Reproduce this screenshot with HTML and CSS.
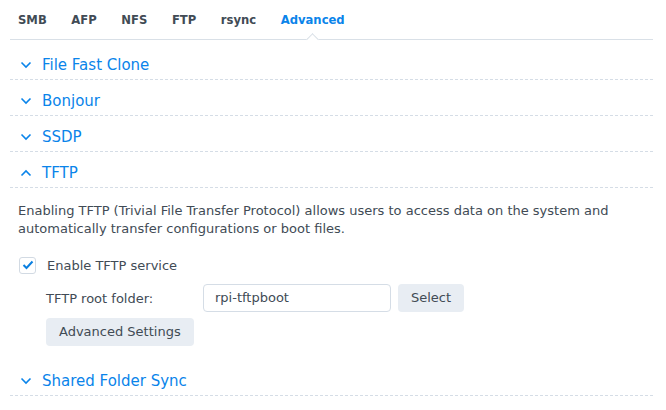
FILE: index.html
```html
<!DOCTYPE html>
<html>
<head>
<meta charset="utf-8">
<link rel="stylesheet" href="styles.css">
</head>
<body>
<div class="page">
  <nav class="tabs">
    <span class="tab">SMB</span>
    <span class="tab">AFP</span>
    <span class="tab">NFS</span>
    <span class="tab">FTP</span>
    <span class="tab">rsync</span>
    <span class="tab active">Advanced</span>
  </nav>
  <div class="sections">
    <div class="section-head">
      <svg class="chev" width="12" height="8" viewBox="0 0 12 8"><path d="M1.5 1.5 L6 6 L10.5 1.5" fill="none" stroke="currentColor" stroke-width="1.6"/></svg>
      <span>File Fast Clone</span>
    </div>
    <div class="section-head">
      <svg class="chev" width="12" height="8" viewBox="0 0 12 8"><path d="M1.5 1.5 L6 6 L10.5 1.5" fill="none" stroke="currentColor" stroke-width="1.6"/></svg>
      <span>Bonjour</span>
    </div>
    <div class="section-head">
      <svg class="chev" width="12" height="8" viewBox="0 0 12 8"><path d="M1.5 1.5 L6 6 L10.5 1.5" fill="none" stroke="currentColor" stroke-width="1.6"/></svg>
      <span>SSDP</span>
    </div>
    <div class="section-head">
      <svg class="chev" width="12" height="8" viewBox="0 0 12 8"><path d="M1.5 6.5 L6 2 L10.5 6.5" fill="none" stroke="currentColor" stroke-width="1.6"/></svg>
      <span>TFTP</span>
    </div>
    <div class="section-body">
      <p class="desc">Enabling TFTP (Trivial File Transfer Protocol) allows users to access data on the system and automatically transfer configurations or boot files.</p>
      <label class="check-row">
        <span class="checkbox"><svg width="12" height="10" viewBox="0 0 12 10"><path d="M1.5 5 L4.5 8 L10.5 1.5" fill="none" stroke="#0a7fe0" stroke-width="2"/></svg></span>
        <span>Enable TFTP service</span>
      </label>
      <div class="indent">
        <div class="field-row">
          <span class="field-label">TFTP root folder:</span>
          <span class="input">rpi-tftpboot</span>
          <span class="btn">Select</span>
        </div>
        <div class="btn-row">
          <span class="btn">Advanced Settings</span>
        </div>
      </div>
    </div>
    <div class="section-head">
      <svg class="chev" width="12" height="8" viewBox="0 0 12 8"><path d="M1.5 1.5 L6 6 L10.5 1.5" fill="none" stroke="currentColor" stroke-width="1.6"/></svg>
      <span>Shared Folder Sync</span>
    </div>
  </div>
</div>
</body>
</html>
```

FILE: styles.css
```css
html, body {
  margin: 0;
  padding: 0;
  background: #ffffff;
}
body {
  font-family: "DejaVu Sans", "Noto Sans", sans-serif;
  color: #414b55;
}
.page {
  width: 643px;
  padding-left: 10px;
}
.tabs {
  display: flex;
  gap: 24.6px;
  height: 39px;
  border-bottom: 1px solid #d9e0e7;
  padding-left: 8px;
}
.tab {
  font-family: "DejaVu Sans", sans-serif;
  font-weight: 700;
  font-size: 11.6px;
  line-height: 40px;
  color: #414b55;
  position: relative;
}
.tab.active {
  color: #0a84ea;
}
.tab.active::after {
  content: "";
  position: absolute;
  left: 50%;
  bottom: -5px;
  width: 8px;
  height: 8px;
  margin-left: -5px;
  background: #ffffff;
  border-left: 1px solid #d9e0e7;
  border-top: 1px solid #d9e0e7;
  transform: rotate(45deg);
}
.sections {
  padding-top: 4px;
}
.section-head {
  display: flex;
  align-items: center;
  gap: 10px;
  height: 20px;
  padding: 11px 0 4px 10px;
  border-bottom: 1px dashed #d5dde6;
  font-size: 15px;
  color: #0a84ea;
}
.chev {
  color: #0a84ea;
  flex: none;
}
.section-body {
  padding: 14px 0 14px 8px;
  font-size: 13px;
}
.desc {
  margin: 0;
  line-height: 18px;
  width: 630px;
  color: #414b55;
}
.check-row {
  display: flex;
  align-items: center;
  gap: 11px;
  margin-top: 19px;
  padding-left: 1px;
  height: 16px;
}
.checkbox {
  width: 15px;
  height: 15px;
  border: 1px solid #d2dae3;
  border-radius: 3px;
  display: flex;
  align-items: center;
  justify-content: center;
  box-sizing: content-box;
}
.indent {
  padding-left: 28px;
}
.field-row {
  display: flex;
  align-items: center;
  margin-top: 11px;
  height: 28px;
}
.field-label {
  width: 157px;
}
.input {
  box-sizing: border-box;
  width: 188px;
  height: 28px;
  border: 1px solid #d5dde6;
  border-radius: 4px;
  padding: 0 11px;
  line-height: 26px;
  color: #414b55;
}
.btn {
  box-sizing: border-box;
  height: 28px;
  line-height: 28px;
  padding: 0 13px;
  border-radius: 4px;
  background: #e8edf3;
  color: #414b55;
  display: inline-block;
}
.field-row .btn {
  margin-left: 7px;
}
.btn-row {
  margin-top: 6px;
  display: flex;
}
```
